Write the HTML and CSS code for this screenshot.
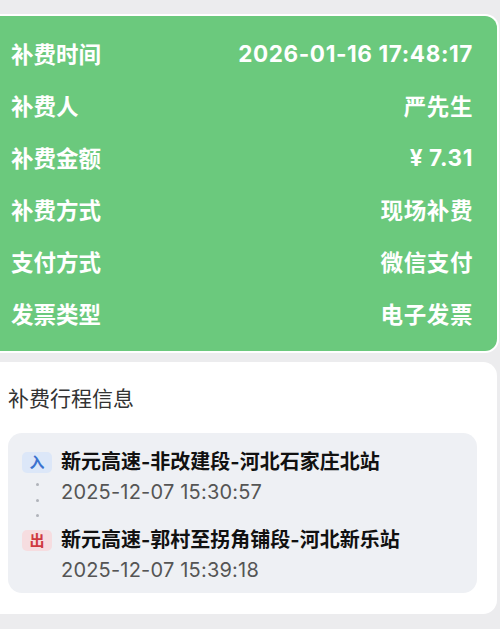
FILE: index.html
```html
<!DOCTYPE html>
<html lang="zh-CN">
<head>
    <meta charset="UTF-8">
    <meta name="viewport" content="width=device-width, initial-scale=1.0">
    <title>补费详情</title>
    <link rel="stylesheet" href="styles.css">
</head>
<body>
    <div class="page">
        <div class="summary-card">
            <div class="summary-row">
                <span class="label">补费时间</span>
                <span class="value">2026-01-16 17:48:17</span>
            </div>
            <div class="summary-row">
                <span class="label">补费人</span>
                <span class="value">严先生</span>
            </div>
            <div class="summary-row">
                <span class="label">补费金额</span>
                <span class="value">¥ 7.31</span>
            </div>
            <div class="summary-row">
                <span class="label">补费方式</span>
                <span class="value">现场补费</span>
            </div>
            <div class="summary-row">
                <span class="label">支付方式</span>
                <span class="value">微信支付</span>
            </div>
            <div class="summary-row">
                <span class="label">发票类型</span>
                <span class="value">电子发票</span>
            </div>
        </div>

        <div class="trip-card">
            <div class="trip-title">补费行程信息</div>
            <div class="trip-box">
                <span class="tag tag-in">入</span>
                <span class="station">新元高速-非改建段-河北石家庄北站</span>
                <span class="dots"><i></i><i></i><i></i></span>
                <span class="time time-first">2025-12-07 15:30:57</span>
                <span class="tag tag-out">出</span>
                <span class="station">新元高速-郭村至拐角铺段-河北新乐站</span>
                <span></span>
                <span class="time">2025-12-07 15:39:18</span>
            </div>
        </div>
    </div>
</body>
</html>
```

FILE: styles.css
```css
* {
    box-sizing: border-box;
    margin: 0;
    padding: 0;
}

body {
    background-color: #ececee;
    font-family: Inter, "Noto Sans CJK SC", sans-serif;
    color: #222;
}

.page {
    padding: 14px 1px 0 0;
}

.summary-card {
    background: #6bc97d;
    border: 2px solid #fff;
    border-left: 0;
    border-radius: 0 14px 14px 0;
    padding: 11px 24px 12px 11px;
}

.summary-row {
    display: flex;
    justify-content: space-between;
    align-items: center;
    height: 52px;
    color: #fff;
    font-size: 22.5px;
    font-weight: 700;
}

.summary-row .value {
    letter-spacing: 0.6px;
}

.trip-card {
    margin-top: 9px;
    margin-right: 2px;
    background: #fff;
    border-radius: 0 14px 14px 0;
    padding: 24px 20px 21px 8px;
}

.trip-title {
    font-size: 21px;
    line-height: 26px;
    color: #333;
    margin-bottom: 21px;
}

.trip-box {
    background: #eef0f4;
    border-radius: 14px;
    padding: 14px 14px 8px;
    display: grid;
    grid-template-columns: 30px 1fr;
    column-gap: 9px;
    align-items: center;
}

.tag {
    height: 21px;
    border-radius: 5px;
    font-size: 15px;
    font-weight: 600;
    line-height: 21px;
    text-align: center;
}

.tag-in {
    background: #dce7f8;
    color: #3a72cf;
}

.tag-out {
    background: #f6dde0;
    color: #cf3a40;
}

.station {
    font-size: 20px;
    line-height: 30px;
    font-weight: 700;
    color: #111;
}

.time {
    font-size: 20px;
    line-height: 30px;
    color: #555;
    letter-spacing: 0.2px;
}

.time-first {
    margin-bottom: 18px;
}

.dots {
    align-self: stretch;
    display: flex;
    flex-direction: column;
    justify-content: space-between;
    align-items: center;
    padding: 6px 0 8px;
}

.dots i {
    width: 3px;
    height: 3px;
    border-radius: 50%;
    background: #b0b3ba;
}
```
